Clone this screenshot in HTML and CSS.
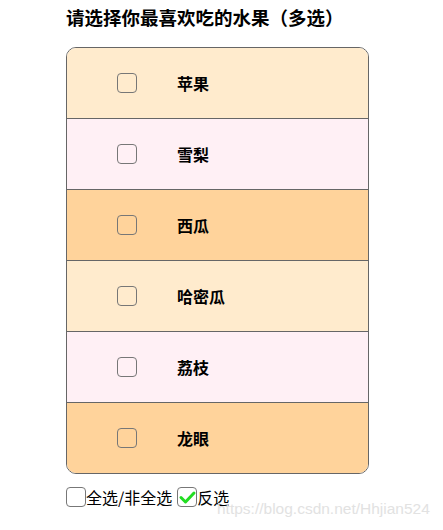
FILE: index.html
```html
<!DOCTYPE html>
<html lang="zh">
<head>
<meta charset="utf-8">
<link rel="stylesheet" href="styles.css">
</head>
<body>
<div class="page">
  <h3 class="title">请选择你最喜欢吃的水果（多选）</h3>
  <div class="list">
    <label class="row c1"><span class="box"></span><span class="name">苹果</span></label>
    <label class="row c2"><span class="box"></span><span class="name">雪梨</span></label>
    <label class="row c3"><span class="box"></span><span class="name">西瓜</span></label>
    <label class="row c1"><span class="box"></span><span class="name">哈密瓜</span></label>
    <label class="row c2"><span class="box"></span><span class="name">荔枝</span></label>
    <label class="row c3"><span class="box"></span><span class="name">龙眼</span></label>
  </div>
  <div class="actions">
    <label class="opt"><span class="box"></span><span>全选/非全选</span></label>
    <label class="opt"><span class="box"><svg viewBox="0 0 20 20" width="20" height="20"><path d="M4 10.5 L8.5 15 L17 6" fill="none" stroke="#22dd22" stroke-width="3" stroke-linecap="round" stroke-linejoin="round"/></svg></span><span>反选</span></label>
  </div>
</div>
<div class="watermark">https://blog.csdn.net/Hhjian524</div>
</body>
</html>
```
FILE: styles.css
```css
html, body {
  margin: 0;
  padding: 0;
  background: #fff;
}
body {
  font-family: "Noto Sans CJK SC", "Noto Sans", sans-serif;
  color: #000;
  position: relative;
  width: 443px;
  height: 530px;
  overflow: hidden;
}
.page {
  padding: 4px 0 0 66px;
}
.title {
  margin: 0;
  font-size: 18.5px;
  line-height: 26px;
  font-weight: bold;
}
.list {
  margin-top: 17px;
  width: 301px;
  border: 1px solid #666;
  border-radius: 10px;
  overflow: hidden;
}
.row {
  display: flex;
  align-items: center;
  height: 70px;
  border-top: 1px solid #666;
}
.row:first-child {
  border-top: none;
}
.c1 { background: #ffebcd; }
.c2 { background: #fff0f5; }
.c3 { background: #ffd39b; }
.box {
  box-sizing: border-box;
  width: 20px;
  height: 20px;
  border: 1px solid #777;
  border-radius: 4px;
  display: inline-block;
  flex: none;
}
.box svg { display: block; margin: -1px; }
.row .box {
  margin-left: 50px;
}
.name {
  margin-left: 40px;
  font-size: 16px;
  font-weight: bold;
}
.actions {
  margin-top: 13px;
  display: flex;
  gap: 5px;
  font-size: 16px;
  line-height: 20px;
}
.opt {
  display: flex;
  align-items: center;
}
.watermark {
  position: absolute;
  left: 217px;
  top: 500px;
  font-family: "Liberation Sans", Arial, sans-serif;
  font-size: 15.5px;
  color: #e2e2e2;
  white-space: nowrap;
}
```
